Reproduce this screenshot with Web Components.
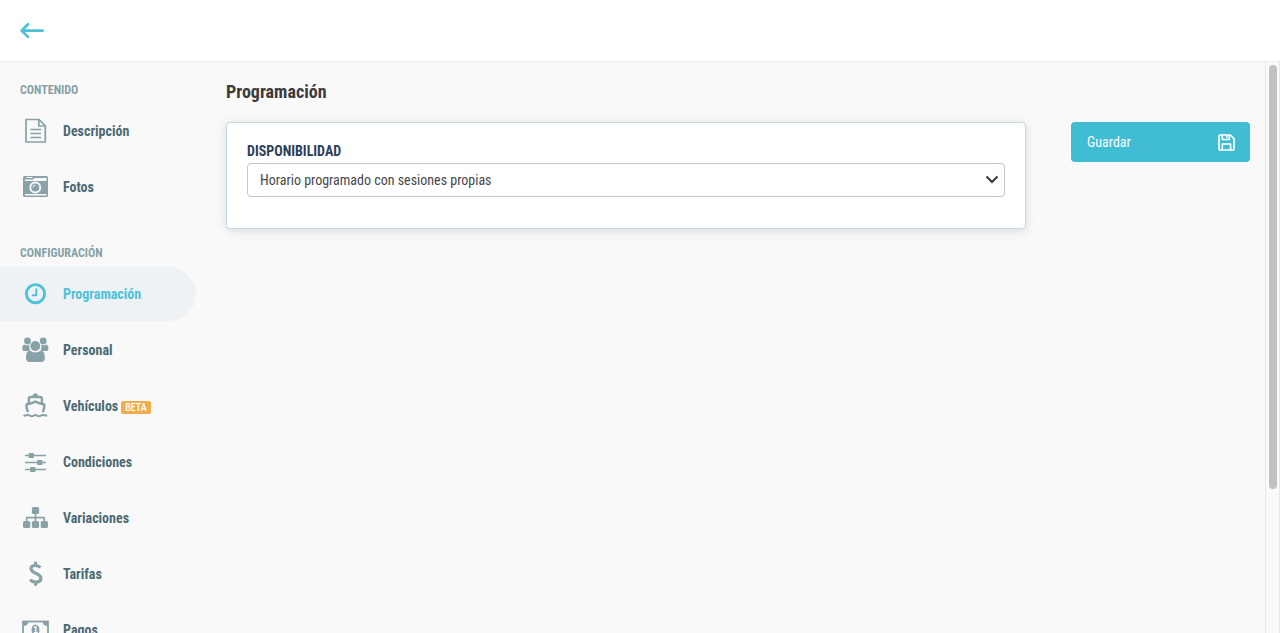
<!DOCTYPE html>
<html lang="es">
<head>
<meta charset="utf-8">
<meta name="viewport" content="width=device-width, initial-scale=1">
<title>Programación</title>
<style>
  body {
    margin: 0;
    font-family: "Roboto Condensed", "Liberation Sans Narrow", Roboto, sans-serif;
    font-size: 14px;
    color: #3c3c3c;
    --accent: #40bdd3;
    --icon: #89a2a8;
    --nav-text: #4d6a73;
  }
</style>
</head>
<body>
<app-shell>
  <app-topbar slot="top"></app-topbar>
  <nav-group slot="nav" heading="CONTENIDO">
    <nav-item icon="file">Descripción</nav-item>
    <nav-item icon="camera">Fotos</nav-item>
  </nav-group>
  <nav-group slot="nav" heading="CONFIGURACIÓN">
    <nav-item icon="clock" active>Programación</nav-item>
    <nav-item icon="users">Personal</nav-item>
    <nav-item icon="boat">Vehículos<nav-badge slot="badge">BETA</nav-badge></nav-item>
    <nav-item icon="sliders">Condiciones</nav-item>
    <nav-item icon="sitemap">Variaciones</nav-item>
    <nav-item icon="dollar">Tarifas</nav-item>
    <nav-item icon="money">Pagos</nav-item>
  </nav-group>
  <page-view heading="Programación">
    <panel-card>
      <select-field label="DISPONIBILIDAD" value="Horario programado con sesiones propias"></select-field>
    </panel-card>
    <save-button slot="actions">Guardar</save-button>
  </page-view>
</app-shell>

<script>
const ICONS = {
  file: `<g fill="none" stroke="currentColor" stroke-width="1.7" stroke-linejoin="round" stroke-linecap="round">
    <path d="M4 1.500h13l6.300 6.300V24H4z"/><path d="M16.800 1.500V8h6.400"/>
    <path d="M9 11.500h9.500M9 15.500h9.500M9 19.500h9.500" stroke-width="1.500"/></g>`,
  camera: `<path fill="currentColor" fill-rule="evenodd" d="M2.500 2h22a1.500 1.500 0 0 1 1.500 1.500v18a1.500 1.500 0 0 1-1.500 1.500h-22A1.500 1.500 0 0 1 1 21.500v-18A1.500 1.500 0 0 1 2.500 2z
    M4.500 3v1h6V3z M3 7h21.500V4H12.500L11 5.500H3z M3 20v1.500h21.500V20z"/>
    <circle cx="13.300" cy="13.500" r="5" fill="#89a2a8" stroke="#f9f9f9" stroke-width="1.900"/>
    <path d="M11 13.500a2.300 2.300 0 0 1 2.300-2.300" fill="none" stroke="#f9f9f9" stroke-width="0.900"/>`,
  clock: `<circle cx="13.500" cy="12.700" r="9.100" fill="none" stroke="currentColor" stroke-width="2.900"/>
    <path d="M14.300 8.300v6H10.600" fill="none" stroke="currentColor" stroke-width="1.900" stroke-linecap="round" stroke-linejoin="round"/>`,
  users: `<g fill="currentColor"><circle cx="5.500" cy="4" r="3.400"/><circle cx="21.200" cy="4" r="3.400"/>
    <path d="M2 7.400c1.200.9 4 1.200 5.700.5-.7 2.100-.4 3.600.4 5.300C6.900 13.400 6.200 14 5.700 14H2.800C1.200 14 .3 13.200.3 11.900c0-1.900.4-4 1.700-4.500z"/>
    <path d="M24.700 7.400c-1.200.9-4 1.200-5.700.5.700 2.100.4 3.600-.4 5.300 1.200.2 1.900.8 2.400.8h2.900c1.600 0 2.500-.8 2.500-2.100 0-1.900-.4-4-1.700-4.500z"/>
    <circle cx="13.300" cy="9" r="4.900"/>
    <path d="M8 13.500c2.500 2.600 8 2.600 10.600 0 3.200.4 4.300 3.200 4.300 7.500 0 2.500-1.500 3.900-3.700 3.900H7.600C5.300 24.900 4 23.500 4 21c0-4.300 1-7.100 4-7.500z"/></g>`,
  boat: `<g fill="none" stroke="currentColor" stroke-width="2.500" stroke-linecap="round" stroke-linejoin="round">
    <path d="M6.800 9.500V6c0-1.400.7-2.100 2-2.100h9.100c1.300 0 2 .7 2 2.100v3.500"/>
    <path d="M5.600 18.200c-.7-2-1.200-4.100-1.100-6.700 3.200-.7 5.900-1.500 8.900-2.900 3 1.400 5.700 2.200 8.900 2.900.1 2.600-.4 4.700-1.100 6.700"/>
    <path stroke-width="2.100" d="M2.300 22.600c1.700 0 2.300-.6 3.700-.6s2.200 1.200 3.900 1.200 2.100-1.200 3.500-1.200 1.900 1.200 3.500 1.200 2.300-1.200 3.800-1.200 2 .6 3.700.6"/></g>
    <path fill="currentColor" d="M10.500 3.500c.2-4.400 5.500-4.400 5.700 0z"/>`,
  sliders: `<path d="M3 6.500h21M3 13.500h21M3 20.500h21" stroke="currentColor" stroke-width="1.500"/>
    <path fill="currentColor" d="M6.700 4h5.200v5H6.700zM15.200 11h5.200v5h-5.200zM8.200 18h5.200v5H8.200z"/>`,
  sitemap: `<path d="M4.700 17v-4.400h17.500V17M13.500 7v10" fill="none" stroke="currentColor" stroke-width="1.600"/>
    <g fill="currentColor"><rect x="9.900" y="2" width="7.200" height="7" rx="1.600"/><rect x="1" y="16" width="7.300" height="7" rx="1.600"/>
    <rect x="9.900" y="16" width="7.200" height="7" rx="1.600"/><rect x="18.700" y="16" width="7.300" height="7" rx="1.600"/></g>`,
  dollar: `<path d="M18.500 6.400C16.500 4.400 9.200 3 9 7.500c-.1 5.300 9.900 4.200 9.900 9.800 0 5.100-7.800 4.700-10.800 1.400M13.600.8v4M13.600 20.800v4" fill="none" stroke="currentColor" stroke-width="3.200"/>`,
  money: `<rect x="1" y="4.500" width="25" height="17" fill="none" stroke="currentColor" stroke-width="1.800"/>
    <path fill="currentColor" d="M1 4h5.500c0 3-2 5-5.500 5zM26 4h-5.500c0 3 2 5 5.500 5zM1 22h5.500c0-3-2-5-5.500-5zM26 22h-5.500c0-3 2-5 5.500-5z"/>
    <ellipse cx="13.500" cy="13" rx="4" ry="5.500" fill="currentColor"/>
    <path d="M12 10.700l1.800-1.200v6M11.800 15.700h4" fill="none" stroke="#f9f9f9" stroke-width="1.300"/>`
};

function define(name, html, setup) {
  const template = document.createElement("template");
  template.innerHTML = html;
  customElements.define(name, class extends HTMLElement {
    constructor() {
      super();
      this.attachShadow({ mode: "open" }).append(template.content.cloneNode(true));
    }
    connectedCallback() {
      if (setup) setup(this, this.shadowRoot);
    }
  });
}

define("app-shell", `
  <style>
    :host { display: flex; flex-direction: column; height: 100vh; overflow: hidden; background: #f9f9f9; }
    .body { flex: 1; min-height: 0; display: flex; }
    .content { flex: 1; min-width: 0; display: flex; overflow: hidden; }
    nav { flex: none; width: 196px; padding-top: 14px; display: flex; flex-direction: column; gap: 25px; }
    main { flex: 1; min-width: 0; }
    .rail { flex: none; width: 8px; padding: 3px 2px 3px 3px; border: solid #e8e8e8; border-width: 0 1px; background: #fafafa; }
    .thumb { height: 75%; border-radius: 4px; background: #c1c1c1; }
  </style>
  <slot name="top"></slot>
  <div class="body">
    <div class="content">
      <nav aria-label="Secciones"><slot name="nav"></slot></nav>
      <main><slot></slot></main>
    </div>
    <div class="rail" aria-hidden="true"><div class="thumb"></div></div>
  </div>`);

define("app-topbar", `
  <style>
    :host { display: block; flex: none; background: #fff; border-bottom: 1px solid #ededed; }
    header { display: flex; align-items: center; height: 61px; padding: 0 20px; }
    a { display: flex; color: #4dc0d6; }
  </style>
  <header><a href="#" aria-label="Volver">
    <svg width="24" height="17" viewBox="0 0 24 17" fill="none" stroke="currentColor" stroke-width="2.700" stroke-linecap="round" stroke-linejoin="round"><path d="M22.600 8.600H1.800M8 2.300L1.600 8.600L8 14.900"/></svg>
  </a></header>`);

define("nav-group", `
  <style>
    :host { display: block; }
    h2 { margin: 0; padding-left: 20px; font-size: 12px; line-height: 28px; font-weight: 700; color: #87a1a6; }
    div { display: flex; flex-direction: column; gap: 2px; }
  </style>
  <h2></h2><div><slot></slot></div>`,
  (el, root) => { root.querySelector("h2").textContent = el.getAttribute("heading"); });

define("nav-item", `
  <style>
    :host { display: block; }
    a { display: flex; align-items: center; height: 54px; padding-left: 22px; border-radius: 0 27px 27px 0;
        font-weight: 700; color: var(--nav-text); text-decoration: none; }
    svg { flex: none; margin-right: 14px; color: var(--icon); }
    :host([active]) a { background: #eef2f5; color: #4fc2d7; }
    :host([active]) svg { color: inherit; }
  </style>
  <a href="#"><svg width="27" height="26" viewBox="0 0 27 26" aria-hidden="true"></svg><slot></slot><slot name="badge"></slot></a>`,
  (el, root) => {
    root.querySelector("svg").innerHTML = ICONS[el.getAttribute("icon")];
    if (el.hasAttribute("active")) root.querySelector("a").setAttribute("aria-current", "page");
  });

define("nav-badge", `
  <style>
    :host { display: block; margin: 2px 0 0 3px; padding: 0 4px; border-radius: 2px; background: #f0ad4e; color: #fff;
            font-size: 10px; line-height: 13px; font-weight: 500; }
  </style><slot></slot>`);

define("page-view", `
  <style>
    :host { display: block; padding: 18px 15px 30px 30px; }
    h1 { margin: 0 0 18px; font-size: 18px; line-height: 24px; font-weight: 700; }
    .row { display: flex; align-items: flex-start; gap: 45px; }
    .fields { flex: 1; min-width: 0; }
    .actions { flex: none; width: 179px; }
  </style>
  <h1></h1>
  <div class="row"><div class="fields"><slot></slot></div><div class="actions"><slot name="actions"></slot></div></div>`,
  (el, root) => { root.querySelector("h1").textContent = el.getAttribute("heading"); });

define("panel-card", `
  <style>
    :host { display: block; padding: 20px 20px 31px; border: 1px solid #cad6e2; border-radius: 4px; background: #fff;
            box-shadow: 0 2px 10px rgba(70, 110, 115, .2); }
  </style><slot></slot>`);

define("select-field", `
  <style>
    :host { display: block; }
    label { display: block; margin-bottom: 4px; line-height: 16px; font-weight: 700; color: #2e3f57; }
    .control { display: grid; align-items: center; }
    select, svg { grid-area: 1 / 1; }
    select { appearance: none; box-sizing: border-box; width: 100%; height: 34px; margin: 0; padding: 0 32px 0 12px;
             border: 1px solid #c0cad4; border-radius: 4px; background: #fff; font: inherit; color: #484848; }
    svg { justify-self: end; margin-right: 6px; pointer-events: none; }
  </style>
  <label for="field"></label>
  <div class="control"><select id="field"><option></option></select>
    <svg width="14" height="10" viewBox="0 0 14 10" fill="none" stroke="#383838" stroke-width="2" aria-hidden="true"><path d="M1.500 1.500L7 7L12.500 1.500"/></svg></div>`,
  (el, root) => {
    root.querySelector("label").textContent = el.getAttribute("label");
    root.querySelector("option").textContent = el.getAttribute("value");
  });

define("save-button", `
  <style>
    :host { display: block; }
    button { display: flex; align-items: center; justify-content: space-between; width: 100%; height: 40px; padding: 0 15px 0 16px;
             border: 0; border-radius: 4px; background: var(--accent); color: #fff; font: inherit; cursor: pointer; }
  </style>
  <button type="button"><span><slot></slot></span>
    <svg width="17" height="17" viewBox="0 0 17 17" fill="none" stroke="currentColor" stroke-width="1.700" stroke-linejoin="round" aria-hidden="true">
      <path d="M2 1h10.300L16 4.700V15a1 1 0 0 1-1 1H2a1 1 0 0 1-1-1V2a1 1 0 0 1 1-1z"/><path d="M4.300 1v4.500h7V1M8.800 1.500v2.300M4.300 16v-6h8.300v6"/></svg>
  </button>`);
</script>
</body>
</html>
